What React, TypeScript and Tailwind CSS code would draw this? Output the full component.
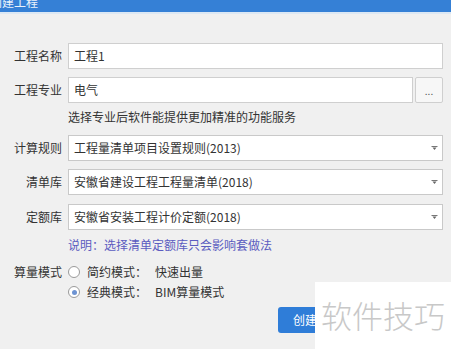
import React from "react";

// 创建工程 dialog — form body only, title bar cropped at the top edge.

const font = { fontFamily: '"Noto Sans CJK SC", "Noto Sans", sans-serif' };

function Arrow() {
  return (
    <svg width="7" height="5" viewBox="0 0 7 5" className="shrink-0">
      <path d="M0.5 0.5h6" stroke="#777" strokeWidth="1" />
      <path d="M1.5 1.5h4L3.5 4z" fill="#666" />
    </svg>
  );
}

function Select({ value }: { value: string }) {
  return (
    <div className="h-[26px] flex items-center justify-between bg-white border border-[#c9c9c9] pl-[5px] pr-[4px] text-[12px] text-[#333]">
      <span>{value}</span>
      <Arrow />
    </div>
  );
}

function Radio({ checked, label, value }: { checked?: boolean; label: string; value: string }) {
  return (
    <div className="flex items-center gap-[7px] h-[20px]">
      <span className="w-[12px] h-[12px] rounded-full border border-[#9a9a9a] bg-white flex items-center justify-center">
        {checked && <span className="w-[5px] h-[5px] rounded-full bg-[#6d93d2]" />}
      </span>
      <span className="text-[12px] text-[#333]">
        {label}
        <span className="ml-[8px]">{value}</span>
      </span>
    </div>
  );
}

export default function App() {
  const label = "w-[63px] shrink-0 text-right pr-[1px] text-[12px] text-[#333]";
  return (
    <div className="relative w-[451px] h-[349px] overflow-hidden bg-[#f0f0f0]" style={font}>
      <div className="h-[12px] bg-[#3580d6] overflow-hidden">
        <div className="ml-[-10px] mt-[-4px] text-[12px] leading-none text-[#eaf2fb]">创建工程</div>
      </div>
      <div className="h-[2px] bg-[#dce8f4]" />

      <div className="flex flex-col pt-[29px] pr-[8px]">
        <div className="flex items-center gap-[5px]">
          <span className={label}>工程名称</span>
          <div className="flex-1 h-[26px] flex items-center bg-white border border-[#cfcfcf] px-[5px] text-[12px] text-[#333]">
            工程1
          </div>
        </div>

        <div className="flex items-center gap-[5px] mt-[8px]">
          <span className={label}>工程专业</span>
          <div className="flex-1 flex gap-[2px] h-[26px]">
            <div className="flex-1 flex items-center bg-white border border-[#cfcfcf] px-[5px] text-[12px] text-[#333]">
              电气
            </div>
            <div className="w-[28px] flex items-center justify-center bg-[#f7f7f7] border border-[#cfcfcf] rounded-[2px] text-[10px] text-[#555]">
              ...
            </div>
          </div>
        </div>

        <div className="h-[28px] flex items-center pl-[68px] text-[12px] text-[#333]">
          选择专业后软件能提供更加精准的功能服务
        </div>

        <div className="flex items-center gap-[5px] mt-[4px]">
          <span className={label}>计算规则</span>
          <div className="flex-1">
            <Select value="工程量清单项目设置规则(2013)" />
          </div>
        </div>
        <div className="flex items-center gap-[5px] mt-[8px]">
          <span className={label}>清单库</span>
          <div className="flex-1">
            <Select value="安徽省建设工程工程量清单(2018)" />
          </div>
        </div>
        <div className="flex items-center gap-[5px] mt-[9px]">
          <span className={label}>定额库</span>
          <div className="flex-1">
            <Select value="安徽省安装工程计价定额(2018)" />
          </div>
        </div>

        <div className="h-[30px] flex items-center pl-[68px] text-[12px] text-[#5b5cc0]">
          说明：选择清单定额库只会影响套做法
        </div>

        <div className="flex gap-[5px] mt-[2px]">
          <span className={`${label} leading-[20px]`}>算量模式</span>
          <div className="flex flex-col">
            <Radio label="简约模式：" value="快速出量" />
            <Radio checked label="经典模式：" value="BIM算量模式" />
          </div>
        </div>

        <div className="mt-[5px] ml-[278px] w-[78px] h-[26px] flex items-center justify-center rounded-[3px] bg-[#2f7dd8] text-[12px] text-white">
          创建工程
        </div>
      </div>

      <div className="absolute right-0 bottom-0 w-[136px] h-[67px] bg-white flex items-center justify-center">
        <span className="text-[31px] font-light text-[#c8c8c8]">软件技巧</span>
      </div>
    </div>
  );
}
